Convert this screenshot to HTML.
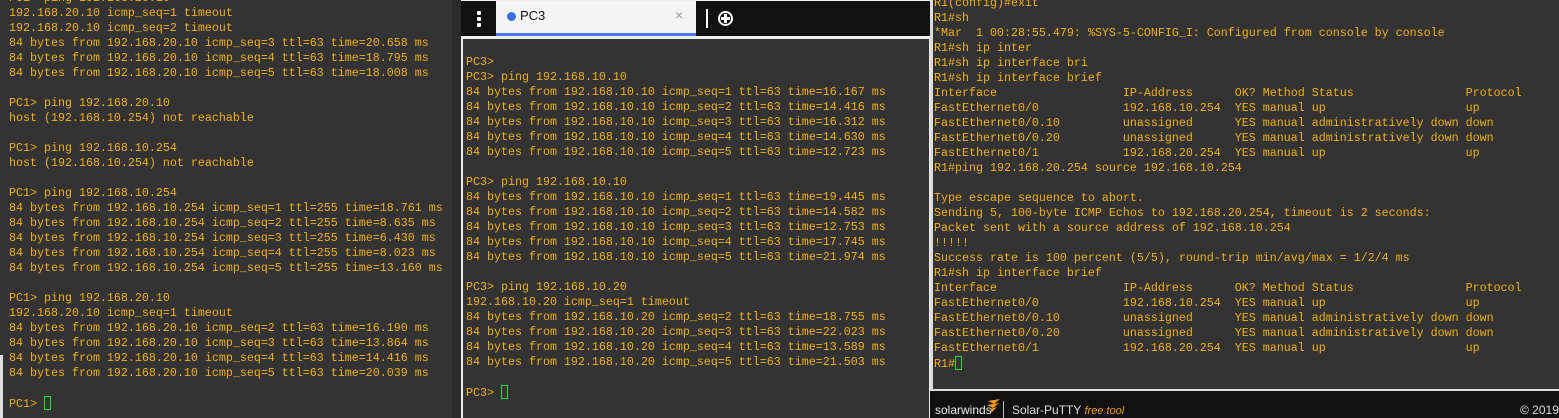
<!DOCTYPE html>
<html><head><meta charset="utf-8"><style>
*{margin:0;padding:0;box-sizing:border-box}
body{width:1559px;height:418px;overflow:hidden;background:#2b2b2b;position:relative;font-family:"Liberation Mono",monospace}
pre{font-family:"Liberation Mono",monospace;font-size:11.67px;line-height:15px;color:#f0b010;position:absolute;white-space:pre}
.cur{display:inline-block;width:7px;height:14px;border:1px solid #22e022;vertical-align:-3px}
</style></head><body>
<div style="position:absolute;left:0;top:0;width:452px;height:418px;background:#333"></div>
<div style="position:absolute;left:0;top:355px;width:3px;height:63px;background:#ddd"></div>
<pre style="left:9px;top:-9px">PC1> ping 192.168.20.10
192.168.20.10 icmp_seq=1 timeout
192.168.20.10 icmp_seq=2 timeout
84 bytes from 192.168.20.10 icmp_seq=3 ttl=63 time=20.658 ms
84 bytes from 192.168.20.10 icmp_seq=4 ttl=63 time=18.795 ms
84 bytes from 192.168.20.10 icmp_seq=5 ttl=63 time=18.008 ms

PC1> ping 192.168.20.10
host (192.168.10.254) not reachable

PC1> ping 192.168.10.254
host (192.168.10.254) not reachable

PC1> ping 192.168.10.254
84 bytes from 192.168.10.254 icmp_seq=1 ttl=255 time=18.761 ms
84 bytes from 192.168.10.254 icmp_seq=2 ttl=255 time=8.635 ms
84 bytes from 192.168.10.254 icmp_seq=3 ttl=255 time=6.430 ms
84 bytes from 192.168.10.254 icmp_seq=4 ttl=255 time=8.023 ms
84 bytes from 192.168.10.254 icmp_seq=5 ttl=255 time=13.160 ms

PC1> ping 192.168.20.10
192.168.20.10 icmp_seq=1 timeout
84 bytes from 192.168.20.10 icmp_seq=2 ttl=63 time=16.190 ms
84 bytes from 192.168.20.10 icmp_seq=3 ttl=63 time=13.864 ms
84 bytes from 192.168.20.10 icmp_seq=4 ttl=63 time=14.416 ms
84 bytes from 192.168.20.10 icmp_seq=5 ttl=63 time=20.039 ms

PC1> <span class="cur"></span></pre>

<!-- middle -->
<div style="position:absolute;left:461px;top:0;width:469px;height:418px;background:#eee"></div>
<div style="position:absolute;left:461px;top:1px;width:469px;height:35px;background:#111"></div>
<div style="position:absolute;left:477px;top:11px;width:4px;height:4px;background:#fff;border-radius:1px;box-shadow:0 6px 0 #fff,0 12px 0 #fff"></div>
<div style="position:absolute;left:496px;top:1px;width:200px;height:35px;background:#f4f4f4;border-bottom:3px solid #4a78e0"></div>
<div style="position:absolute;left:507px;top:12px;width:9px;height:9px;border-radius:50%;background:#3b6fe8"></div>
<div style="position:absolute;left:520px;top:8px;font-family:'Liberation Sans',sans-serif;font-size:13px;color:#111">PC3</div>
<div style="position:absolute;left:675px;top:7px;font-family:'Liberation Sans',sans-serif;font-size:14px;color:#999">×</div>
<div style="position:absolute;left:706px;top:9px;width:2px;height:19px;background:#fff"></div>
<div style="position:absolute;left:718px;top:11px;width:15px;height:15px;border:2px solid #fff;border-radius:50%"></div>
<div style="position:absolute;left:721px;top:17px;width:9px;height:3px;background:#fff"></div>
<div style="position:absolute;left:724px;top:14px;width:3px;height:9px;background:#fff"></div>
<div style="position:absolute;left:463px;top:39px;width:466px;height:379px;background:#333"></div>
<pre style="left:466px;top:55px">PC3>
PC3> ping 192.168.10.10
84 bytes from 192.168.10.10 icmp_seq=1 ttl=63 time=16.167 ms
84 bytes from 192.168.10.10 icmp_seq=2 ttl=63 time=14.416 ms
84 bytes from 192.168.10.10 icmp_seq=3 ttl=63 time=16.312 ms
84 bytes from 192.168.10.10 icmp_seq=4 ttl=63 time=14.630 ms
84 bytes from 192.168.10.10 icmp_seq=5 ttl=63 time=12.723 ms

PC3> ping 192.168.10.10
84 bytes from 192.168.10.10 icmp_seq=1 ttl=63 time=19.445 ms
84 bytes from 192.168.10.10 icmp_seq=2 ttl=63 time=14.582 ms
84 bytes from 192.168.10.10 icmp_seq=3 ttl=63 time=12.753 ms
84 bytes from 192.168.10.10 icmp_seq=4 ttl=63 time=17.745 ms
84 bytes from 192.168.10.10 icmp_seq=5 ttl=63 time=21.974 ms

PC3> ping 192.168.10.20
192.168.10.20 icmp_seq=1 timeout
84 bytes from 192.168.10.20 icmp_seq=2 ttl=63 time=18.755 ms
84 bytes from 192.168.10.20 icmp_seq=3 ttl=63 time=22.023 ms
84 bytes from 192.168.10.20 icmp_seq=4 ttl=63 time=13.589 ms
84 bytes from 192.168.10.20 icmp_seq=5 ttl=63 time=21.503 ms

PC3> <span class="cur"></span></pre>

<!-- right -->
<div style="position:absolute;left:930px;top:0;width:629px;height:418px;background:#ddd"></div>
<div style="position:absolute;left:933px;top:0;width:626px;height:389px;background:#333"></div>
<div style="position:absolute;left:930px;top:391px;width:629px;height:27px;background:#111"></div>
<pre style="left:934px;top:-4px">R1(config)#exit
R1#sh
*Mar  1 00:28:55.479: %SYS-5-CONFIG_I: Configured from console by console
R1#sh ip inter
R1#sh ip interface bri
R1#sh ip interface brief
Interface                  IP-Address      OK? Method Status                Protocol
FastEthernet0/0            192.168.10.254  YES manual up                    up
FastEthernet0/0.10         unassigned      YES manual administratively down down
FastEthernet0/0.20         unassigned      YES manual administratively down down
FastEthernet0/1            192.168.20.254  YES manual up                    up
R1#ping 192.168.20.254 source 192.168.10.254

Type escape sequence to abort.
Sending 5, 100-byte ICMP Echos to 192.168.20.254, timeout is 2 seconds:
Packet sent with a source address of 192.168.10.254
!!!!!
Success rate is 100 percent (5/5), round-trip min/avg/max = 1/2/4 ms
R1#sh ip interface brief
Interface                  IP-Address      OK? Method Status                Protocol
FastEthernet0/0            192.168.10.254  YES manual up                    up
FastEthernet0/0.10         unassigned      YES manual administratively down down
FastEthernet0/0.20         unassigned      YES manual administratively down down
FastEthernet0/1            192.168.20.254  YES manual up                    up
R1#<span class="cur"></span></pre>
<div style="position:absolute;left:935px;top:403px;font-family:'Liberation Sans',sans-serif;font-size:12px;color:#eee">solarwinds</div>
<svg style="position:absolute;left:985px;top:399px" width="16" height="16"><path d="M3 2 L15 0 L9 5 Z M2 6 L14 4 L8 9Z M5 10 L12 8 L7 13Z" fill="#f39c12"/></svg>
<div style="position:absolute;left:1003px;top:401px;width:1px;height:17px;background:#bbb"></div>
<div style="position:absolute;left:1012px;top:403px;font-family:'Liberation Sans',sans-serif;font-size:12px;color:#ddd">Solar-PuTTY <i style="color:#f39c12;font-size:11px">free tool</i></div>
<div style="position:absolute;left:1520px;top:403px;font-family:'Liberation Sans',sans-serif;font-size:12px;color:#ddd;white-space:nowrap">© 2019</div>
</body></html>
